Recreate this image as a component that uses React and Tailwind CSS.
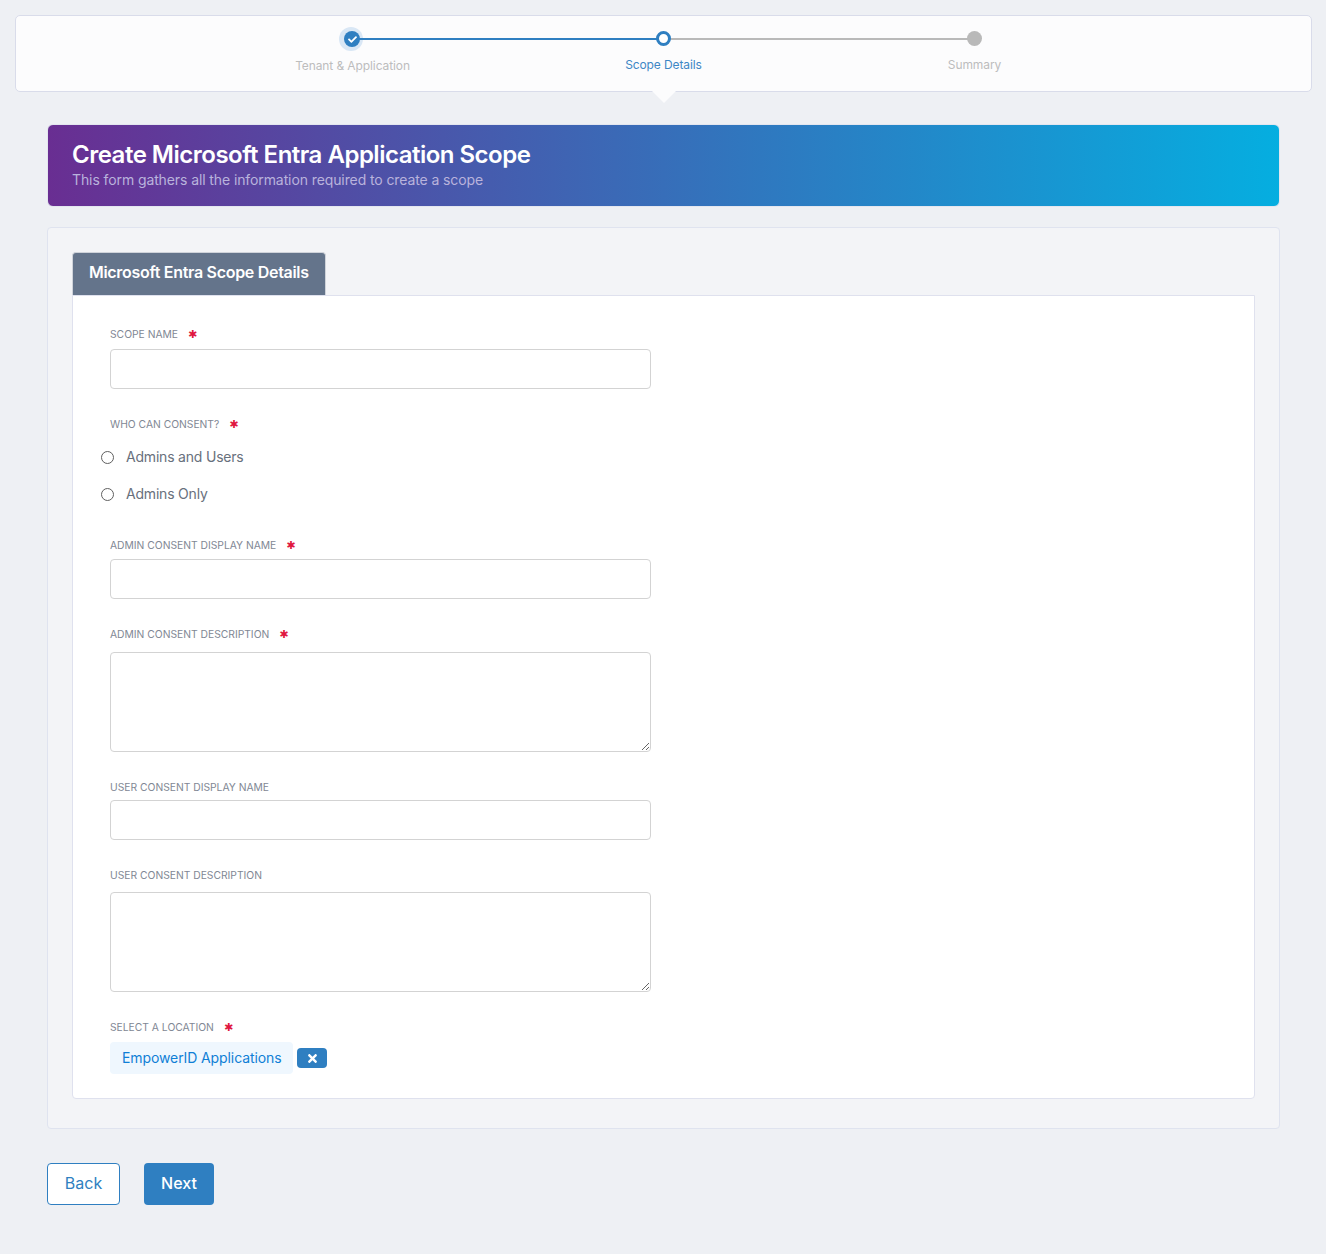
import { FaCheck, FaTimes } from 'react-icons/fa'

const fontStack = "font-['Inter','Roboto',sans-serif]"

function Label({ text, required }) {
  return (
    <div className="flex items-center h-[14px] text-[10.3px] leading-[14px] uppercase text-[#7f8794]">
      <span>{text}</span>
      {required && <span className="ml-[10px] pt-[1px] font-['DejaVu_Sans',sans-serif] text-[#e0173f] text-[11px] leading-[14px]">✱</span>}
    </div>
  )
}

function TextInput() {
  return <input type="text" className="block w-[541px] h-[40px] bg-white border border-[#d3d3d3] rounded-[4px]" />
}

function TextArea() {
  return <textarea className="block w-[541px] h-[100px] bg-white border border-[#d3d3d3] rounded-[4px]" />
}

function Radio({ label }) {
  return (
    <label className="flex items-center h-[20px] -ml-[9px] text-[14px] tracking-[-0.2px] text-[#68707c]">
      <span className="w-[13px] h-[13px] rounded-full border border-[#5f5f5f] bg-white" />
      <span className="ml-[12px] pb-[2px]">{label}</span>
    </label>
  )
}

function Stepper() {
  return (
    <div className="relative h-[77px] bg-[#fcfcfd] border border-[#d9dcea] rounded-[5px]">
      <div className="grid grid-cols-3 w-[933px] mx-auto pt-[14px] text-[12px] leading-[15px] tracking-[-0.1px]">
        {/* Step 1 */}
        <div className="relative flex flex-col items-center">
          <div className="absolute left-[142px] top-[-3px] w-[24px] h-[24px] rounded-full bg-[#d9e7f5]" />
          <div className="absolute left-1/2 top-[8px] w-full h-[2px] bg-[#2f7fc1]" />
          <div className="relative -ml-[1px] w-[16px] h-[16px] mt-[1px] rounded-full bg-[#2f7fc1] flex items-center justify-center">
            <FaCheck size={9} className="text-white" />
          </div>
          <div className="mt-[11px] text-[#bdbdbd]">Tenant &amp; Application</div>
        </div>
        {/* Step 2 */}
        <div className="relative flex flex-col items-center">
          <div className="absolute left-1/2 top-[8px] w-full h-[2px] bg-[#b9b9b9]" />
          <div className="relative w-[15px] h-[15px] mt-[1px] rounded-full bg-white border-[3px] border-[#2f7fc1]" />
          <div className="mt-[11px] text-[#3d87c5]">Scope Details</div>
        </div>
        {/* Step 3 */}
        <div className="relative flex flex-col items-center">
          <div className="relative w-[15px] h-[15px] mt-[1px] rounded-full bg-[#b9b9b9]" />
          <div className="mt-[11px] text-[#bdbdbd]">Summary</div>
        </div>
      </div>
      {/* little notch under the active step */}
      <div className="absolute left-[636px] top-[75px] w-0 h-0 border-l-[12px] border-r-[12px] border-t-[12px] border-l-transparent border-r-transparent border-t-[#fcfcfd]" />
    </div>
  )
}

export default function App() {
  return (
    <div className={`${fontStack} min-h-[1254px] bg-[#eef0f4] pt-[15px] pl-[15px] pr-[14px]`}>
      <Stepper />

      <div className="px-[32px] pt-[32px]">
        {/* Banner */}
        <div className="h-[83px] rounded-[6px] border border-[#e3e6ef] px-[24px] pt-[15px] bg-[linear-gradient(90deg,#692e92,#05aee0)]">
          <h1 className="text-[24px] leading-[30px] font-semibold text-white tracking-[-0.5px]">Create Microsoft Entra Application Scope</h1>
          <p className="text-[14px] leading-[20px] tracking-[-0.1px] text-[#b9b3dc]">This form gathers all the information required to create a scope</p>
        </div>

        {/* Panel */}
        <div className="mt-[20px] h-[902px] bg-[#f3f4f7] border border-[#dfe3ef] rounded-[4px] pt-[24px] px-[24px]">
          <div className="flex items-center w-[254px] h-[43px] pl-[16px] pb-[5px] bg-[#64748b] border border-[#cfd3da] border-b-0 rounded-t-[4px] text-[16px] font-semibold text-white tracking-[-0.3px]">
            Microsoft Entra Scope Details
          </div>
          <div className="h-[804px] bg-white border border-[#dfe1ee] rounded-b-[4px] pl-[37px] pt-[31px]">
            <div className="mb-[8px]"><Label text="Scope Name" required /></div>
            <TextInput />

            <div className="mt-[28px]"><Label text="Who can consent?" required /></div>
            <div className="mt-[16px] flex flex-col gap-[17px]">
              <Radio label="Admins and Users" />
              <Radio label="Admins Only" />
            </div>

            <div className="mt-[34px] mb-[7px]"><Label text="Admin Consent Display Name" required /></div>
            <TextInput />

            <div className="mt-[28px] mb-[11px]"><Label text="Admin Consent Description" required /></div>
            <TextArea />

            <div className="mt-[28px] mb-[6px]"><Label text="User Consent Display Name" /></div>
            <TextInput />

            <div className="mt-[28px] mb-[10px]"><Label text="User Consent Description" /></div>
            <TextArea />

            <div className="mt-[28px]"><Label text="Select a Location" required /></div>
            <div className="flex items-center mt-[8px]">
              <div className="flex items-center h-[32px] px-[12px] pb-[2px] bg-[#eff7fe] rounded-[4px] text-[14px] tracking-[-0.1px] text-[#0f7fd6]">EmpowerID Applications</div>
              <button className="flex items-center justify-center w-[30px] h-[20px] ml-[4px] bg-[#2f7fc1] rounded-[4px]">
                <FaTimes size={13} className="text-white" />
              </button>
            </div>
          </div>
        </div>

        {/* Footer buttons */}
        <div className="flex gap-[24px] mt-[34px]">
          <button className="w-[73px] h-[42px] pb-[2px] bg-white border border-[#2f7fc1] rounded-[4px] text-[16px] text-[#2f7fc1]">Back</button>
          <button className="w-[70px] h-[42px] pb-[2px] bg-[#2f7fc1] rounded-[4px] text-[16px] font-medium text-white">Next</button>
        </div>
      </div>
    </div>
  )
}
